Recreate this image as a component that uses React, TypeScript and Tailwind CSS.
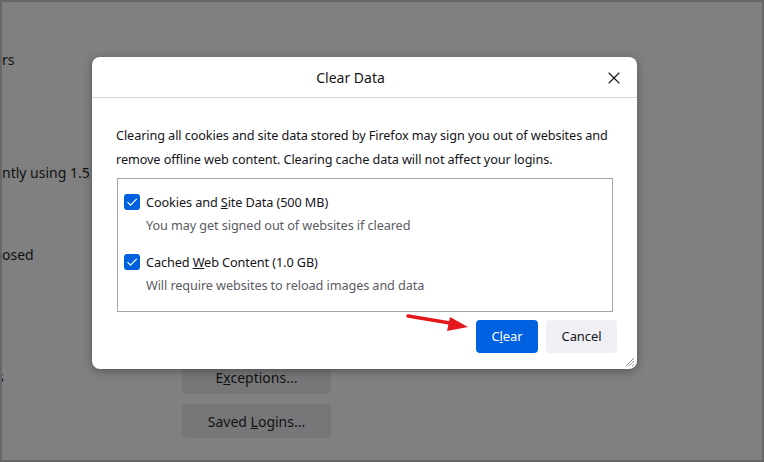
import { X } from "lucide-react";

const font = { fontFamily: '"Noto Sans", "Open Sans", sans-serif' };

function Check() {
  return (
    <span className="grid size-4 shrink-0 place-items-center rounded-[3px] bg-[#0061e0]">
      <svg viewBox="0 0 16 16" className="size-4" fill="none">
        <path d="M3.5 8.2l3 3L12.8 4.8" stroke="white" strokeWidth="1.2" />
      </svg>
    </span>
  );
}

function Option({
  label,
  sub,
}: {
  label: React.ReactNode;
  sub: string;
}) {
  return (
    <div className="leading-[20px]">
      <div className="flex items-center gap-[6px]">
        <Check />
        <span className="text-[#15141a]">{label}</span>
      </div>
      <div className="mt-[3px] pl-[22px] text-[#5b5b66]">{sub}</div>
    </div>
  );
}

export default function App() {
  return (
    <div
      className="relative h-[462px] w-[764px] overflow-hidden border-2 border-[#676767] bg-[#808080] text-[14px] text-[#111]"
      style={font}
    >
      {/* page behind the dialog */}
      <div className="flex flex-col">
        <div className="mt-[46px] h-6 leading-6">rs</div>
        <div className="mt-[89px] h-6 leading-6">ntly using 1.5 GB of disk space</div>
        <div className="mt-[58px] h-6 leading-6">osed</div>
        <div className="ml-[180px] mt-[93px] flex flex-col gap-[10px]">
          <div className="grid h-[34px] w-[149px] place-items-center rounded-[4px] bg-[#777779]">
            <span>
              E<u>x</u>ceptions...
            </span>
          </div>
          <div className="grid h-[34px] w-[149px] place-items-center rounded-[4px] bg-[#777779]">
            <span>
              Saved <u>L</u>ogins...
            </span>
          </div>
        </div>
      </div>
      <div className="absolute left-[-5px] top-[363px] text-[14px] leading-6">s</div>

      {/* dialog */}
      <div className="absolute left-[90px] top-[55px] flex h-[312px] w-[545px] flex-col rounded-[8px] bg-white text-[12.7px] tracking-[-0.1px] shadow-[0_2px_10px_rgba(0,0,0,0.35)]">
        <div className="relative flex h-[41px] shrink-0 items-center justify-center border-b border-[#d7d7db] pr-[28px]">
          <span className="text-[14px] tracking-normal text-[#15141a]">Clear Data</span>
          <X
            className="absolute right-[13px] top-[11px] size-[20px] text-[#15141a]"
            strokeWidth={1.3}
          />
        </div>
        <div className="flex flex-1 flex-col px-[24px] pt-[25px]">
          <p className="leading-6 text-[#15141a]">
            Clearing all cookies and site data stored by Firefox may sign you out of websites and
            remove offline web content. Clearing cache data will not affect your logins.
          </p>
          <div className="ml-px mt-[7px] flex h-[134px] flex-col gap-[17px] border border-[#a4a4ab] pl-[6px] pt-[13px]">
            <Option
              label={
                <>
                  Cookies and <u>S</u>ite Data (500 MB)
                </>
              }
              sub="You may get signed out of websites if cleared"
            />
            <Option
              label={
                <>
                  Cached <u>W</u>eb Content (1.0 GB)
                </>
              }
              sub="Will require websites to reload images and data"
            />
          </div>
          <div className="mt-[8px] flex justify-end gap-[8px]">
            <button className="h-[33px] w-[62px] rounded-[4px] bg-[#0061e0] text-[13px] text-white">
              C<u>l</u>ear
            </button>
            <button className="mr-[-4px] h-[33px] w-[71px] rounded-[4px] bg-[#f0f0f4] text-[13px] text-[#15141a]">
              Cancel
            </button>
          </div>
        </div>
        <svg
          className="absolute bottom-[2px] right-[2px] size-[12px]"
          viewBox="0 0 12 12"
          stroke="#8f8f9d"
          strokeWidth="1"
        >
          <path d="M11 3L3 11M11 6L6 11M11 9L9 11" />
        </svg>
      </div>

      {/* red arrow */}
      <svg
        className="absolute left-[402px] top-[308px]"
        width="70"
        height="26"
        viewBox="0 0 70 26"
      >
        <path d="M4 6L52 14" stroke="#e3191b" strokeWidth="3.5" strokeLinecap="round" />
        <path d="M64 17L46 7L43 21Z" fill="#e3191b" />
      </svg>
    </div>
  );
}
